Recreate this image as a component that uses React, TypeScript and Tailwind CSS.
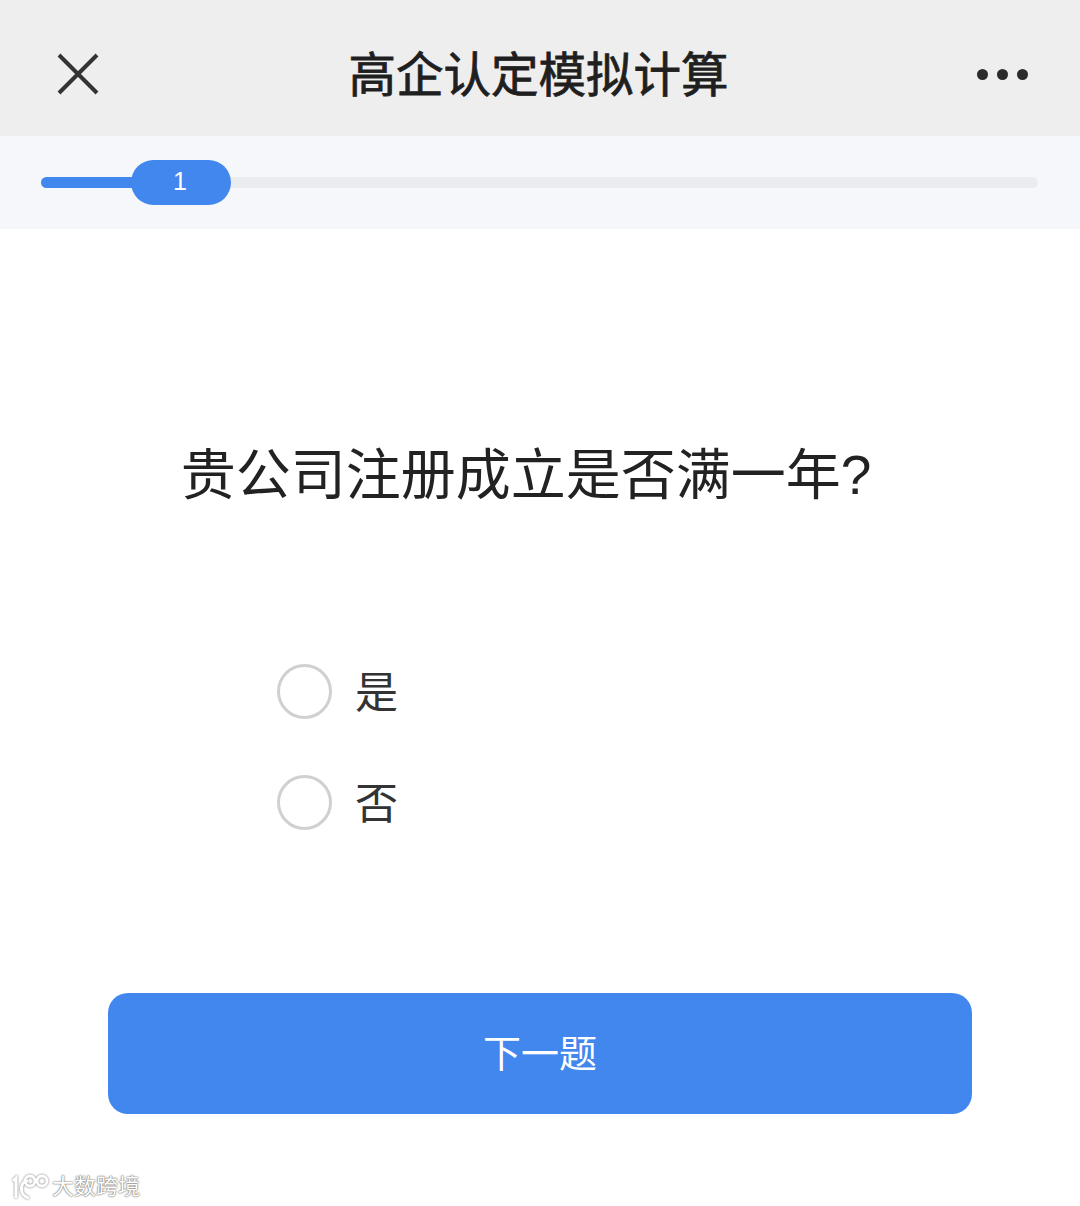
const fontStack = {
  fontFamily: '"Liberation Sans", "Noto Sans CJK SC", sans-serif',
};

function CloseIcon() {
  return (
    <svg width="44" height="44" viewBox="0 0 44 44" fill="none" stroke="#333333" strokeWidth="4">
      <path d="M3 3 L41 41 M41 3 L3 41" />
    </svg>
  );
}

function Option({ label }: { label: string }) {
  return (
    <div className="flex h-[55px] items-center">
      <span className="h-[55px] w-[55px] rounded-full border-[3px] border-[#d0d0d0] bg-white" />
      <span className="ml-[23px] pt-[4px] text-[43px] leading-[55px] font-normal text-[#333333]">{label}</span>
    </div>
  );
}

function WatermarkLogo() {
  return (
    <svg width="40" height="28" viewBox="0 0 40 28" fill="none" stroke="#ffffff" strokeWidth="3">
      <g style={{ filter: "drop-shadow(0 0 1px #777777)" }}>
        <path d="M3 8 L6 5 L6 25" />
        <path d="M18 8 C9 8 9 23 19 25" />
        <circle cx="20" cy="8" r="5" />
        <circle cx="32" cy="8" r="5" />
      </g>
    </svg>
  );
}

export default function App() {
  return (
    <div className="flex h-[1206px] w-[1080px] flex-col overflow-hidden bg-white" style={fontStack}>
      <header className="flex h-[136px] items-center justify-between bg-[#eeeeef] pt-[12px] pr-[52px] pl-[56px]">
        <CloseIcon />
        <h1 className="pt-[4px] text-[47.5px] leading-none font-normal text-[#1f1f1f] [-webkit-text-stroke:0.8px_#1f1f1f]">
          高企认定模拟计算
        </h1>
        <div className="flex gap-[9px]">
          <span className="h-[11px] w-[11px] rounded-full bg-[#2b2b2b]" />
          <span className="h-[11px] w-[11px] rounded-full bg-[#2b2b2b]" />
          <span className="h-[11px] w-[11px] rounded-full bg-[#2b2b2b]" />
        </div>
      </header>

      <div className="flex h-[93px] items-center bg-[#f6f7fa] pr-[42px] pl-[41px]">
        <div className="relative h-[11px] w-full rounded-full bg-[#ebecf0]">
          <div className="h-full w-[100px] rounded-l-full bg-[#4287ee]" />
          <div className="absolute top-[-17px] left-[90px] flex h-[45px] w-[100px] items-center justify-center rounded-full bg-[#4287ee] pr-[2px] pb-[2px] text-[25px] text-white">
            1
          </div>
        </div>
      </div>

      <h2 className="mt-[212px] pr-[28px] text-center text-[55px] leading-[68px] font-normal text-[#222222]">
        贵公司注册成立是否满一年?
      </h2>

      <div className="mt-[155px] ml-[277px] flex flex-col gap-[56px]">
        <Option label="是" />
        <Option label="否" />
      </div>

      <button className="mx-[108px] mt-[163px] h-[121px] rounded-[20px] bg-[#4287ee] pt-[1px] text-[38px] font-normal text-white">
        下一题
      </button>

      <div className="mt-[59px] ml-[10px] flex items-center gap-[2px]">
        <WatermarkLogo />
        <span
          className="text-[22px] leading-[28px] text-white"
          style={{ textShadow: "0 0 2px #666666, 0 0 1px #666666" }}
        >
          大数跨境
        </span>
      </div>
    </div>
  );
}
